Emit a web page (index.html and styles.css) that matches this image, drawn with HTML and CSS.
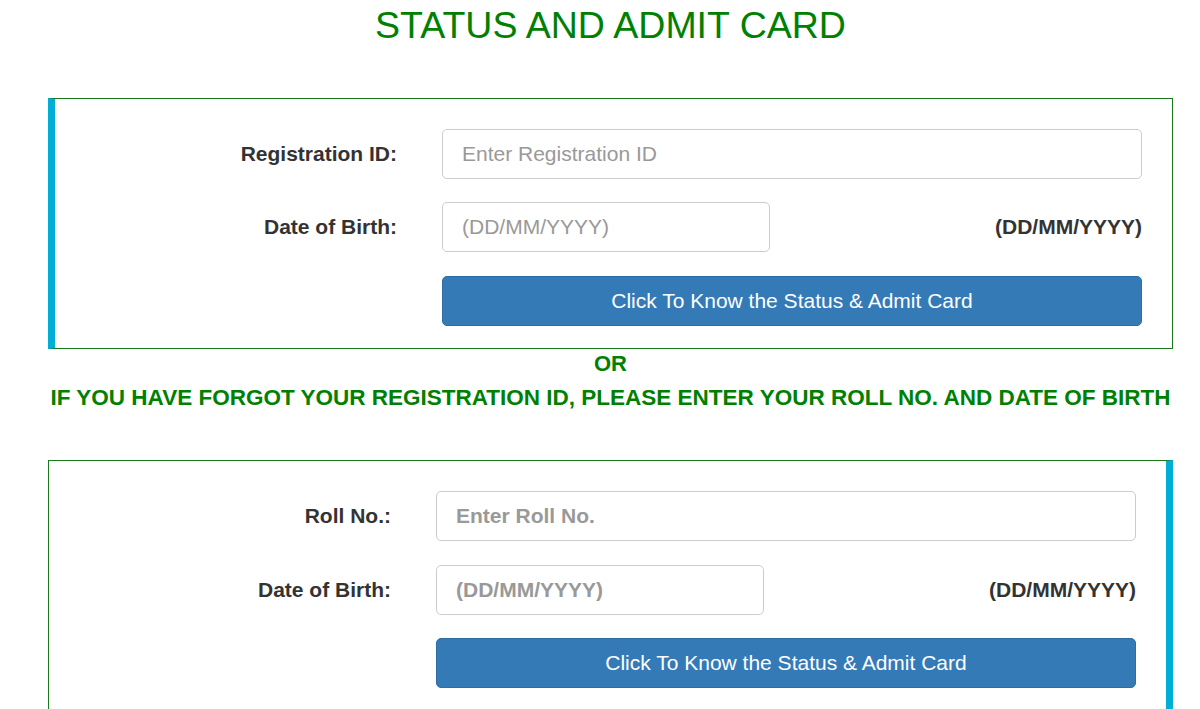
FILE: index.html
```html
<!DOCTYPE html>
<html>
<head>
<meta charset="utf-8">
<link rel="stylesheet" href="styles.css">
</head>
<body>
<div class="page">
  <h1 class="title">STATUS AND ADMIT CARD</h1>

  <div class="panel panel-left">
    <div class="form-row">
      <label class="label">Registration ID:</label>
      <input class="field" type="text" placeholder="Enter Registration ID">
    </div>
    <div class="form-row">
      <label class="label">Date of Birth:</label>
      <div class="dob">
        <input class="field field-short" type="text" placeholder="(DD/MM/YYYY)">
        <span class="hint">(DD/MM/YYYY)</span>
      </div>
    </div>
    <div class="form-row form-row-btn">
      <span></span>
      <button class="btn">Click To Know the Status &amp; Admit Card</button>
    </div>
  </div>

  <div class="or">OR</div>
  <div class="note">IF YOU HAVE FORGOT YOUR REGISTRATION ID, PLEASE ENTER YOUR ROLL NO. AND DATE OF BIRTH</div>

  <div class="panel panel-right">
    <div class="form-row">
      <label class="label">Roll No.:</label>
      <input class="field field-bold" type="text" placeholder="Enter Roll No.">
    </div>
    <div class="form-row form-row-dob2">
      <label class="label">Date of Birth:</label>
      <div class="dob">
        <input class="field field-short field-bold" type="text" placeholder="(DD/MM/YYYY)">
        <span class="hint">(DD/MM/YYYY)</span>
      </div>
    </div>
    <div class="form-row">
      <span></span>
      <button class="btn">Click To Know the Status &amp; Admit Card</button>
    </div>
  </div>
</div>
</body>
</html>
```

FILE: styles.css
```css
* { box-sizing: border-box; }
html, body { margin: 0; padding: 0; background: #fff; }
body {
  font-family: "Liberation Sans", Arial, sans-serif;
  color: #333;
  overflow: hidden;
}
.page {
  width: 1125px;
  margin-left: 48px;
}
.title {
  margin: 0;
  padding-top: 5px;
  height: 98px;
  text-align: center;
  font-size: 37.5px;
  font-weight: normal;
  color: #008000;
  line-height: 40px;
}
.panel {
  border: 1px solid #1a7a1a;
  padding: 30px 30px 22px 0;
  display: flex;
  flex-direction: column;
  gap: 23px;
}
.panel-left { border-left: 7px solid #00aed6; }
.panel-right {
  border-right: 7px solid #00aed6;
  padding-bottom: 40px;
}
.form-row {
  display: grid;
  grid-template-columns: 1fr 700px;
  column-gap: 45px;
  align-items: center;
}
.form-row-btn { margin-top: 1px; }
.form-row-dob2 { margin-top: 1px; }
.label {
  text-align: right;
  font-weight: bold;
  font-size: 21px;
  color: #333;
}
.field {
  height: 50px;
  width: 100%;
  border: 1px solid #ccc;
  border-radius: 5px;
  padding: 0 19px;
  font-family: "Liberation Sans", Arial, sans-serif;
  font-size: 21px;
  color: #555;
  background: #fff;
  outline: none;
}
.field::placeholder { color: #999; }
.field-bold::placeholder { font-weight: bold; }
.field-short { width: 328px; }
.dob {
  display: flex;
  justify-content: space-between;
  align-items: center;
}
.hint {
  font-weight: bold;
  font-size: 21px;
  color: #333;
}
.btn {
  height: 50px;
  width: 100%;
  border: 1px solid #2e6da4;
  border-radius: 5px;
  background: #337ab7;
  color: #fff;
  font-family: "Liberation Sans", Arial, sans-serif;
  font-size: 21px;
}
.or {
  text-align: center;
  font-weight: bold;
  font-size: 22px;
  color: #008000;
  margin-top: 3px;
  line-height: 24px;
}
.note {
  text-align: center;
  font-weight: bold;
  font-size: 22.5px;
  color: #008000;
  margin-top: 10px;
  line-height: 24px;
  margin-bottom: 50px;
  white-space: nowrap;
}
```
